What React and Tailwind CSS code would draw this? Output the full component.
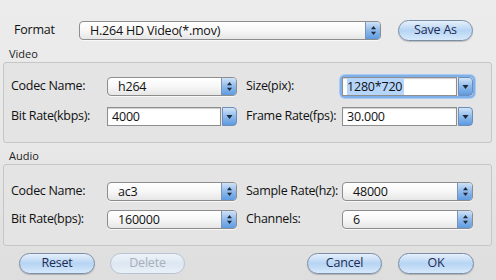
import React from "react";

const font = { fontFamily: '"Open Sans", "DejaVu Sans", "Liberation Sans", sans-serif' };

function UpDown() {
  return (
    <svg width="7" height="11" viewBox="0 0 7 11">
      <path d="M3.5 1 L6 4.2 L1 4.2 Z" fill="#1d2a3a" />
      <path d="M3.5 10 L6 6.8 L1 6.8 Z" fill="#1d2a3a" />
    </svg>
  );
}

function Down() {
  return (
    <svg width="7" height="6" viewBox="0 0 7 6">
      <path d="M0.5 1 L6.5 1 L3.5 5 Z" fill="#1d2a3a" />
    </svg>
  );
}

function Popup({ value, className = "" }) {
  return (
    <div
      className={`flex h-[19px] items-stretch overflow-hidden rounded-[4px] border border-[#8d8d8d] bg-gradient-to-b from-[#ffffff] via-[#f7f7f7] to-[#e6e6e6] shadow-[0_1px_0_rgba(255,255,255,0.7)] ${className}`}
    >
      <div className="flex-1 whitespace-nowrap pl-[10px] text-[12.5px] leading-[17px] tracking-[-0.2px] text-[#111]">{value}</div>
      <div className="flex w-[15px] items-center justify-center border-l border-[#7a94b8] bg-gradient-to-b from-[#cfe2f8] via-[#8fb9ea] to-[#5e9be2]">
        <UpDown />
      </div>
    </div>
  );
}

function Combo({ value, focused = false, className = "" }) {
  return (
    <div
      className={`flex h-[19px] items-stretch ${focused ? "rounded-[3px] shadow-[0_0_0_2px_#7fb0ea,0_0_0_3px_#a9cbf2]" : ""} ${className}`}
    >
      <div className="flex flex-1 items-center whitespace-nowrap border border-[#8e8e8e] bg-white pl-[4px] text-[12.5px] leading-[17px] tracking-[-0.2px] text-[#111] shadow-[inset_0_1px_1px_rgba(0,0,0,0.2)]">
        <span className={focused ? "bg-[#b5d5fb] pr-[2px]" : ""}>{value}</span>
      </div>
      <div className="ml-[1px] flex w-[15px] items-center justify-center rounded-r-[4px] border border-[#6f8db8] bg-gradient-to-b from-[#d2e4f8] via-[#8ebbeb] to-[#5d9ae0]">
        <Down />
      </div>
    </div>
  );
}

function Button({ label, disabled = false, className = "" }) {
  return (
    <div
      className={`flex h-[21px] items-center justify-center whitespace-nowrap rounded-full border text-[12.5px] tracking-[-0.2px] ${
        disabled
          ? "border-[#b7c3d2] bg-gradient-to-b from-[#eef3f9] via-[#dde7f2] to-[#e9f0f8] text-[#a7b0ba]"
          : "border-[#7c8ea6] bg-gradient-to-b from-[#e6f0fb] via-[#b6d4f3] to-[#d7e9fb] text-[#1d2a55] shadow-[0_1px_1px_rgba(0,0,0,0.2)]"
      } ${className}`}
    >
      {label}
    </div>
  );
}

function Row({ l1, c1, l2, c2, className = "" }) {
  return (
    <div className={`grid grid-cols-[96px_130px_9px_96px_131px] items-center ${className}`}>
      <div className="whitespace-nowrap text-[12.5px] tracking-[-0.3px] text-[#111]">{l1}</div>
      {c1}
      <div />
      <div className="whitespace-nowrap text-[12.5px] tracking-[-0.3px] text-[#111]">{l2}</div>
      {c2}
    </div>
  );
}

export default function App() {
  return (
    <div className="h-[280px] w-[496px] overflow-hidden bg-gradient-to-b from-[#ececec] via-[#e8e8e8] to-[#dedede]" style={font}>
      <div className="flex items-center pt-[20px]">
        <div className="w-[79px] pl-[14px] text-[12.5px] tracking-[-0.2px] text-[#111]">Format</div>
        <Popup value="H.264 HD Video(*.mov)" className="w-[302px]" />
        <Button label="Save As" className="ml-[17px] w-[75px]" />
      </div>

      <div className="mt-[6px] pl-[9px] text-[11px] leading-[14px] text-[#222]">Video</div>
      <div className="ml-[3px] mt-[1px] h-[81px] w-[489px] rounded-[3px] border border-[#c6c6c6] bg-[#e4e4e4] pl-[7px] pt-[14px]">
        <Row
          l1="Codec Name:"
          c1={<Popup value="h264" />}
          l2="Size(pix):"
          c2={<Combo value="1280*720" focused />}
        />
        <Row
          className="mt-[11px]"
          l1="Bit Rate(kbps):"
          c1={<Combo value="4000" />}
          l2="Frame Rate(fps):"
          c2={<Combo value="30.000" />}
        />
      </div>

      <div className="mt-[6px] pl-[9px] text-[11px] leading-[14px] text-[#222]">Audio</div>
      <div className="ml-[3px] mt-[1px] h-[82px] w-[489px] rounded-[3px] border border-[#c6c6c6] bg-[#e4e4e4] pl-[7px] pt-[17px]">
        <Row
          l1="Codec Name:"
          c1={<Popup value="ac3" />}
          l2="Sample Rate(hz):"
          c2={<Popup value="48000" />}
        />
        <Row
          className="mt-[9px]"
          l1="Bit Rate(bps):"
          c1={<Popup value="160000" />}
          l2="Channels:"
          c2={<Popup value="6" />}
        />
      </div>

      <div className="mt-[7px] flex">
        <Button label="Reset" className="ml-[19px] w-[76px]" />
        <Button label="Delete" disabled className="ml-[15px] w-[75px]" />
        <Button label="Cancel" className="ml-[122px] w-[75px]" />
        <Button label="OK" className="ml-[16px] w-[76px]" />
      </div>
    </div>
  );
}
